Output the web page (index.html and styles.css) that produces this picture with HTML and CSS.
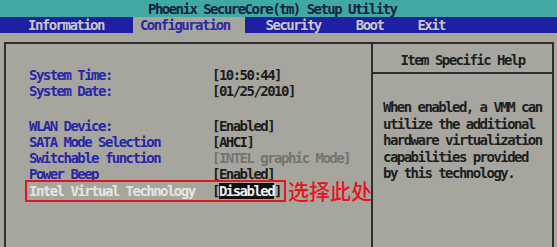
FILE: index.html
```html
<!DOCTYPE html>
<html lang="en">
<head>
<meta charset="utf-8">
<title>Phoenix SecureCore Setup Utility</title>
<link rel="stylesheet" href="styles.css">
</head>
<body>
<div class="title">Phoenix SecureCore(tm) Setup Utility</div>
<nav class="menu">
  <span class="menu-item m-info">Information</span>
  <span class="menu-item m-config">Configuration</span>
  <span class="menu-item m-sec">Security</span>
  <span class="menu-item m-boot">Boot</span>
  <span class="menu-item m-exit">Exit</span>
</nav>
<div class="frame">
  <section class="settings">
    <div class="row"><span class="label">System Time:</span><span class="value">[10:50:44]</span></div>
    <div class="row"><span class="label">System Date:</span><span class="value">[01/25/2010]</span></div>
    <div class="spacer"></div>
    <div class="row"><span class="label">WLAN Device:</span><span class="value">[Enabled]</span></div>
    <div class="row"><span class="label">SATA Mode Selection</span><span class="value">[AHCI]</span></div>
    <div class="row"><span class="label">Switchable function</span><span class="value value-off">[INTEL graphic Mode]</span></div>
    <div class="row"><span class="label">Power Beep</span><span class="value">[Enabled]</span></div>
    <div class="row">
      <div class="annot-box"><span class="label label-sel">Intel Virtual Technology</span><span class="value">[<span class="hl">Disabled</span>]</span></div>
      <span class="annot-text">选择此处</span>
    </div>
  </section>
  <aside class="help">
    <div class="help-head">Item Specific Help</div>
    <div class="help-body">When enabled, a VMM can<br>utilize the additional<br>hardware virtualization<br>capabilities provided<br>by this technology.</div>
  </aside>
</div>
</body>
</html>
```
FILE: styles.css
```css
html, body {
  margin: 0;
  height: 100%;
  overflow: hidden;
}
body {
  background: #a6a69e;
  font-family: "DejaVu Sans Mono", monospace;
  font-weight: bold;
  font-size: 14px;
  letter-spacing: -1.53px;
  white-space: nowrap;
}
.title {
  height: 17px;
  box-sizing: border-box;
  padding: 2px 0 0 148px;
  line-height: 15px;
  background: #3fa9a2;
  color: #162244;
}
.menu {
  display: flex;
  height: 16px;
  line-height: 16px;
  background: #1f1fa5;
  color: #c8c8c2;
}
.m-info { margin-left: 28px; }
.m-config {
  margin-left: 29px;
  padding: 0 15px 0 7px;
  background: #a6a69e;
  color: #2a2aa6;
}
.m-sec { margin-left: 21px; }
.m-boot { margin-left: 35px; }
.m-exit { margin-left: 34px; }

.frame {
  display: grid;
  grid-template-columns: 365px 1fr;
  height: 205px;
  box-sizing: border-box;
  margin: 9px 3px 0 4px;
  border: 2px solid #2e2e2c;
  border-bottom: none;
}
.settings {
  padding: 23px 0 0 23px;
}
.row {
  display: flex;
  align-items: flex-start;
  line-height: 16px;
}
.spacer { height: 19px; }
.label {
  width: 183px;
  color: #2626a6;
}
.label-sel { color: #e6e6e0; }
.value { color: #1c1c1c; }
.value-off { color: #74746e; }
.hl {
  background: #111111;
  color: #efefef;
}
.annot-box {
  display: flex;
  margin: -2px 0 0 -4px;
  padding: 1px 3px 1px 2px;
  border: 2px solid #e2161c;
}
.annot-text {
  margin: -3px 0 0 2px;
  font-family: "Noto Sans CJK SC", sans-serif;
  font-size: 21px;
  font-weight: 500;
  line-height: 22px;
  letter-spacing: 0;
  color: #e8141c;
}
.help {
  border-left: 2px solid #2e2e2c;
  color: #1e1e1e;
}
.help-head {
  height: 30px;
  box-sizing: border-box;
  padding-top: 8px;
  line-height: 16px;
  text-align: center;
  border-bottom: 2px solid #2e2e2c;
}
.help-body {
  padding: 25px 0 0 10px;
  line-height: 16.5px;
}
```
